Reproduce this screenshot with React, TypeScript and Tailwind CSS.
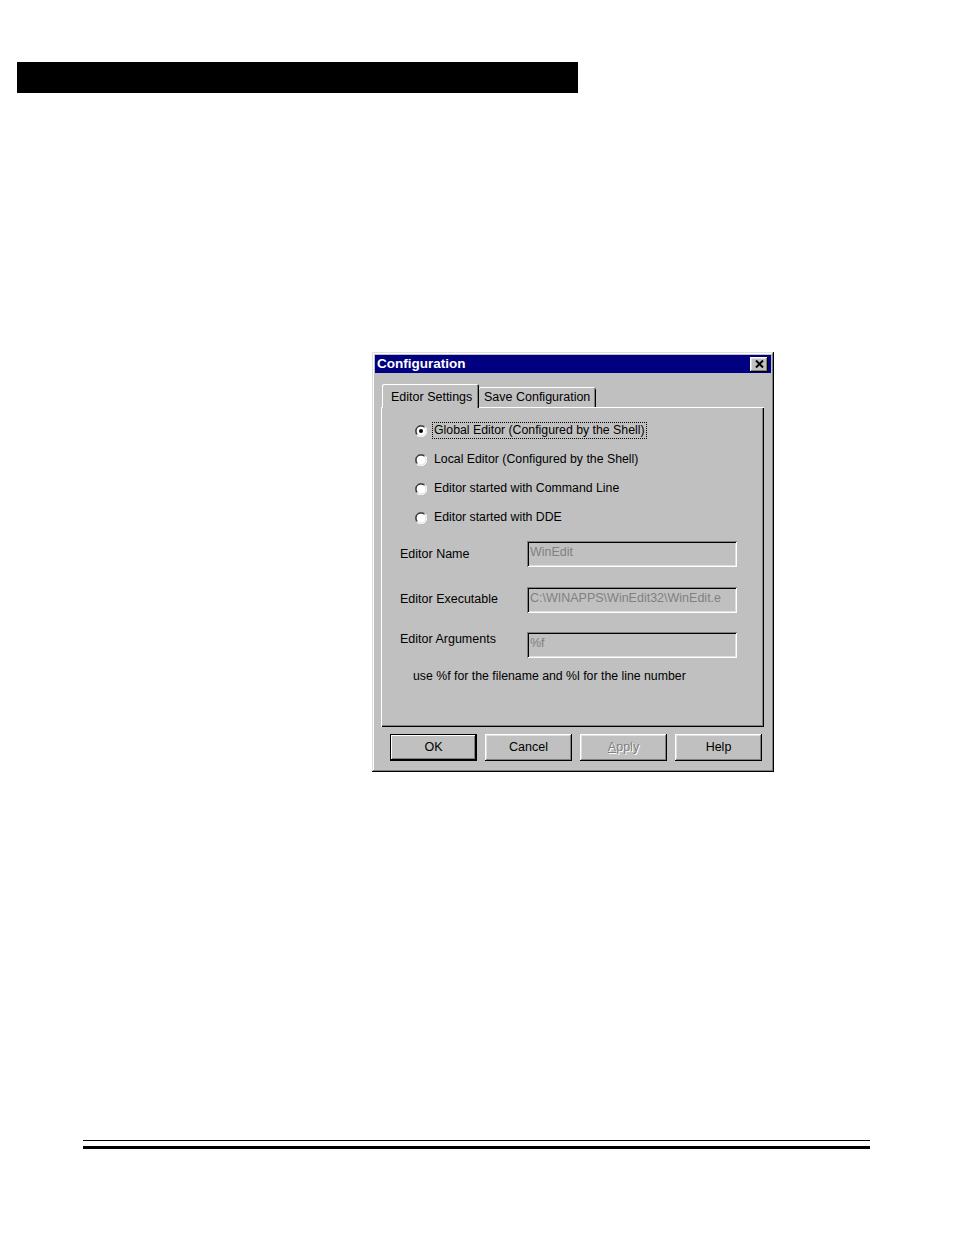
import React from "react";

const font = { fontFamily: '"Liberation Sans", Arial, sans-serif' };

function Radio({ checked }: { checked?: boolean }) {
  return (
    <svg width="12" height="12" viewBox="0 0 12 12" className="shrink-0">
      <circle cx="6" cy="6" r="5.5" fill="#ffffff" />
      <path d="M10.24 1.76 A6 6 0 0 0 1.76 10.24" fill="none" stroke="#808080" strokeWidth="1" />
      <path d="M1.76 10.24 A6 6 0 0 0 10.24 1.76" fill="none" stroke="#ffffff" strokeWidth="1" />
      <path d="M9.54 2.46 A5 5 0 0 0 2.46 9.54" fill="none" stroke="#000000" strokeWidth="1" />
      <path d="M2.46 9.54 A5 5 0 0 0 9.54 2.46" fill="none" stroke="#dfdfdf" strokeWidth="1" />
      {checked && <circle cx="6" cy="6" r="2" fill="#000000" />}
    </svg>
  );
}

const radios = [
  "Global Editor (Configured by the Shell)",
  "Local Editor (Configured by the Shell)",
  "Editor started with Command Line",
  "Editor started with DDE",
];

const fields = [
  { label: "Editor Name", value: "WinEdit", mt: "mt-[9px]", labelPt: "pt-[6px]" },
  { label: "Editor Executable", value: "C:\\WINAPPS\\WinEdit32\\WinEdit.e", mt: "mt-[20px]", labelPt: "pt-[5px]" },
  { label: "Editor Arguments", value: "%f", mt: "mt-[19px]", labelPt: "pt-[0px]" },
];

const raised =
  "shadow-[inset_-1px_-1px_#000000,inset_1px_1px_#ffffff,inset_-2px_-2px_#808080,inset_2px_2px_#dfdfdf]";

function Button({ children, isDefault }: { children: React.ReactNode; isDefault?: boolean }) {
  return (
    <div
      className={
        "w-[87px] h-[27px] flex items-center justify-center text-[12.5px] text-black bg-[#c0c0c0] " +
        (isDefault
          ? "shadow-[inset_0_0_0_1px_#000000,inset_-2px_-2px_#000000,inset_2px_2px_#ffffff,inset_-3px_-3px_#808080]"
          : raised)
      }
    >
      {children}
    </div>
  );
}

export default function App() {
  return (
    <div className="w-[954px] h-[1235px] bg-white overflow-hidden" style={font}>
      <div className="pt-[62px] pl-[17px]">
        <div className="w-[561px] h-[31px] bg-black" />
      </div>

      <div
        className={
          "ml-[372px] mt-[259px] w-[402px] h-[420px] bg-[#c0c0c0] p-[3px] flex flex-col " +
          "shadow-[inset_-1px_-1px_#000000,inset_1px_1px_#dfdfdf,inset_-2px_-2px_#808080,inset_2px_2px_#ffffff]"
        }
      >
        {/* title bar */}
        <div className="h-[18px] bg-[#000080] flex items-center justify-between pl-[2px] pr-[3px]">
          <span className="text-white font-bold text-[13.5px] leading-none">Configuration</span>
          <div className={"w-[18px] h-[15px] bg-[#c0c0c0] flex items-center justify-center " + raised}>
            <svg width="9" height="8" viewBox="0 0 9 8">
              <path d="M1 0.5 L8 7.5 M8 0.5 L1 7.5" stroke="#000" strokeWidth="2" />
            </svg>
          </div>
        </div>

        {/* tabs */}
        <div className="mt-[10px] pl-[7px] flex items-end h-[24px] relative z-10">
          <div className="w-[97px] h-[24px] -mb-[1px] bg-[#c0c0c0] flex items-start pt-[4px] pl-[9px] text-[12.5px] text-black rounded-t-[2px] shadow-[inset_1px_1px_#ffffff,inset_-1px_0_#000000,inset_-2px_0_#808080]">
            Editor Settings
          </div>
          <div className="w-[117px] h-[20px] bg-[#c0c0c0] flex items-center pl-[5px] text-[12.5px] text-black rounded-t-[2px] shadow-[inset_0_1px_#ffffff,inset_-1px_0_#000000,inset_-2px_0_#808080]">
            Save Configuration
          </div>
        </div>

        {/* panel */}
        <div className="ml-[6px] w-[383px] h-[320px] flex flex-col pt-[9px] shadow-[inset_1px_1px_#ffffff,inset_-1px_-1px_#000000,inset_-2px_-2px_#808080]">
          <div className="flex flex-col pl-[34px]">
            {radios.map((r, i) => (
              <div key={r} className="h-[29px] flex items-center gap-[6px] text-[12.3px] text-black">
                <Radio checked={i === 0} />
                <span
                  className={
                    "px-[1px] leading-[15px] " +
                    (i === 0 ? "outline outline-1 outline-dotted outline-black" : "")
                  }
                >
                  {r}
                </span>
              </div>
            ))}
          </div>

          {fields.map((f) => (
            <div key={f.label} className={"flex pl-[19px] " + f.mt}>
              <div className={"w-[127px] text-[12.5px] text-black leading-[15px] " + f.labelPt}>{f.label}</div>
              <div className="w-[210px] h-[26px] bg-[#c0c0c0] pl-[3px] pt-[4px] text-[12.5px] leading-[14px] text-[#808080] overflow-hidden whitespace-nowrap shadow-[inset_1px_1px_#808080,inset_-1px_-1px_#ffffff,inset_2px_2px_#000000,inset_-2px_-2px_#dfdfdf]">
                {f.value}
              </div>
            </div>
          ))}

          <div className="mt-[10px] pl-[32px] text-[12.3px] leading-[16px] text-black">
            use %f for the filename and %l for the line number
          </div>
        </div>

        {/* buttons */}
        <div className="mt-[7px] pl-[15px] flex gap-[8px]">
          <Button isDefault>OK</Button>
          <Button>Cancel</Button>
          <Button>
            <span className="text-[#808080] [text-shadow:1px_1px_#ffffff]">
              <span className="underline">A</span>pply
            </span>
          </Button>
          <Button>Help</Button>
        </div>
      </div>

      <div className="ml-[83px] w-[787px] mt-[368px]">
        <div className="h-[1px] bg-black" />
        <div className="h-[3px] bg-black mt-[5px]" />
      </div>
    </div>
  );
}
